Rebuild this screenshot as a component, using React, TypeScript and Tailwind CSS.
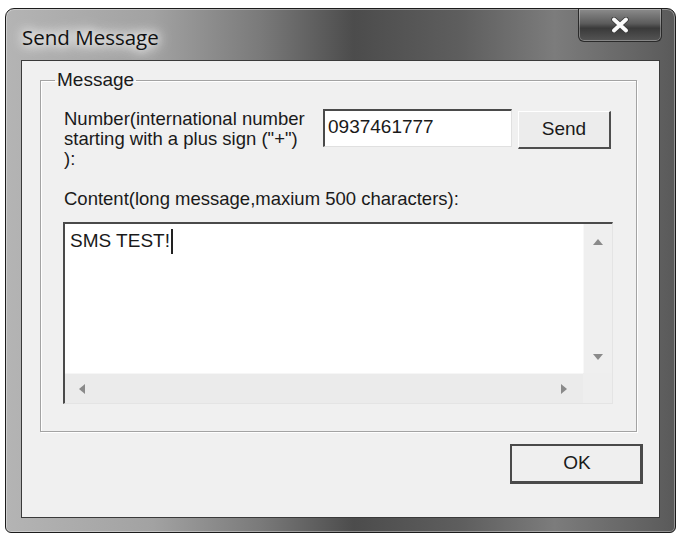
import React from "react";

const ui = { fontFamily: '"Liberation Sans", Arial, sans-serif' };

function Arrow({ dir }: { dir: "up" | "down" | "left" | "right" }) {
  const pts = {
    up: "0,6 5,0 10,6",
    down: "0,0 5,6 10,0",
    left: "6,0 0,5 6,10",
    right: "0,0 6,5 0,10",
  }[dir];
  const vertical = dir === "up" || dir === "down";
  return (
    <svg width={vertical ? 10 : 6} height={vertical ? 6 : 10} viewBox={vertical ? "0 0 10 6" : "0 0 6 10"}>
      <polygon points={pts} fill="#8a8a8a" />
    </svg>
  );
}

function MessageBox() {
  return (
    <div className="w-[550px] h-[182px] -ml-px grid grid-cols-[1fr_29px] grid-rows-[1fr_30px] bg-white border-t-2 border-l-2 border-t-[#4a4a4a] border-l-[#4a4a4a] border-r border-b border-r-[#e4e4e4] border-b-[#e4e4e4]">
      <div className="pl-[5px] pt-[6px] text-[19px] leading-[22px] text-[#1a1a1a] flex items-start" style={ui}>
        <span>SMS TEST!</span>
        <span className="ml-px mt-[-1px] w-[2px] h-[25px] bg-[#222]" />
      </div>
      <div className="bg-[#efefef] border-l border-[#f8f8f8] flex flex-col items-center justify-between pt-[15px] pb-[13px]">
        <Arrow dir="up" />
        <Arrow dir="down" />
      </div>
      <div className="bg-[#ebebeb] border-t border-[#f6f6f6] flex items-center justify-between pl-[14px] pr-[16px]">
        <Arrow dir="left" />
        <Arrow dir="right" />
      </div>
      <div className="bg-[#eeeeee]" />
    </div>
  );
}

export default function App() {
  return (
    <div className="w-[681px] h-[537px] bg-white pt-[8px] pl-[5px] overflow-hidden">
      {/* window frame */}
      <div className="w-[671px] h-[525px] rounded-t-[9px] rounded-b-[6px] border border-[#1c1c1c] bg-[linear-gradient(to_right,#b4b4b4_0%,#a2a2a2_22%,#7a7a7a_38%,#4c4c4c_52%,#5e5e5e_68%,#7c7c7c_82%,#5a5a5a_100%)] shadow-[inset_0_0_0_1px_rgba(255,255,255,0.35)] flex flex-col">
        {/* title bar */}
        <div className="h-[51px] flex items-start justify-between pl-[16px] pr-[13px]">
          <span
            className="pt-[15px] text-[20.5px] leading-[26px] text-[#111] [text-shadow:0_0_10px_#fff,0_0_14px_#fff,0_0_18px_#fff]"
            style={{ fontFamily: '"Open Sans", "Noto Sans", sans-serif' }}
          >
            Send Message
          </span>
          <button className="w-[84px] h-[33px] rounded-b-[6px] border border-[#2a2a2a] border-t-0 bg-[linear-gradient(to_bottom,#8c8c8c_0%,#5c5c5c_45%,#3a3a3a_60%,#555555_100%)] shadow-[inset_0_0_0_1px_rgba(255,255,255,0.3)] flex items-center justify-center">
            <svg width="20" height="16" viewBox="0 0 20 16">
              <path d="M4 2.5 L16 13.5 M16 2.5 L4 13.5" stroke="#3a3a3a" strokeWidth="5.5" strokeLinecap="round" />
              <path d="M4 2.5 L16 13.5 M16 2.5 L4 13.5" stroke="#fafafa" strokeWidth="3.8" strokeLinecap="round" />
            </svg>
          </button>
        </div>

        {/* client area */}
        <div className="flex-1 ml-[15px] mr-[15px] mb-[14px] bg-[#f0f0f0] border border-[#3a3a3a] flex flex-col" style={ui}>
          <fieldset className="mt-[8px] ml-[18px] mr-[22px] border border-[#a3a3a3] shadow-[1px_1px_0_#fff,inset_1px_1px_0_#fff] pl-[23px] pt-[18px] pb-[27px]">
            <legend className="-ml-[9px] px-[2px] text-[19px] leading-[22px] text-[#1a1a1a]">Message</legend>

            <div className="flex items-start">
              <p className="w-[246px] text-[18.5px] leading-[20px] text-[#1a1a1a]">
                Number(international number starting with a plus sign ("+") ):
              </p>
              <div className="ml-[13px] w-[189px] h-[38px] bg-white border-t-2 border-l-2 border-t-[#4a4a4a] border-l-[#4a4a4a] border-r border-b border-r-[#e0e0e0] border-b-[#e0e0e0] pl-[3px] pt-[5px] text-[19px] leading-[22px] text-[#1a1a1a]">
                0937461777
              </div>
              <button className="ml-[6px] mt-[2px] w-[93px] h-[38px] bg-[#ececec] border-t border-l border-t-white border-l-white border-r-2 border-b-2 border-r-[#4e4e4e] border-b-[#4e4e4e] text-[19px] text-[#1a1a1a]">
                Send
              </button>
            </div>

            <p className="mt-[20px] text-[18.5px] leading-[20px] text-[#1a1a1a]">
              Content(long message,maxium 500 characters):
            </p>

            <div className="mt-[13px]">
              <MessageBox />
            </div>
          </fieldset>

          <div className="mt-[12px] flex justify-end pr-[16px]">
            <button className="w-[133px] h-[40px] bg-[#efefef] border-2 border-[#4a4a4a] border-b-[3px] border-r-[3px] text-[19px] text-[#1a1a1a] pl-[2px]">
              OK
            </button>
          </div>
        </div>
      </div>
    </div>
  );
}
